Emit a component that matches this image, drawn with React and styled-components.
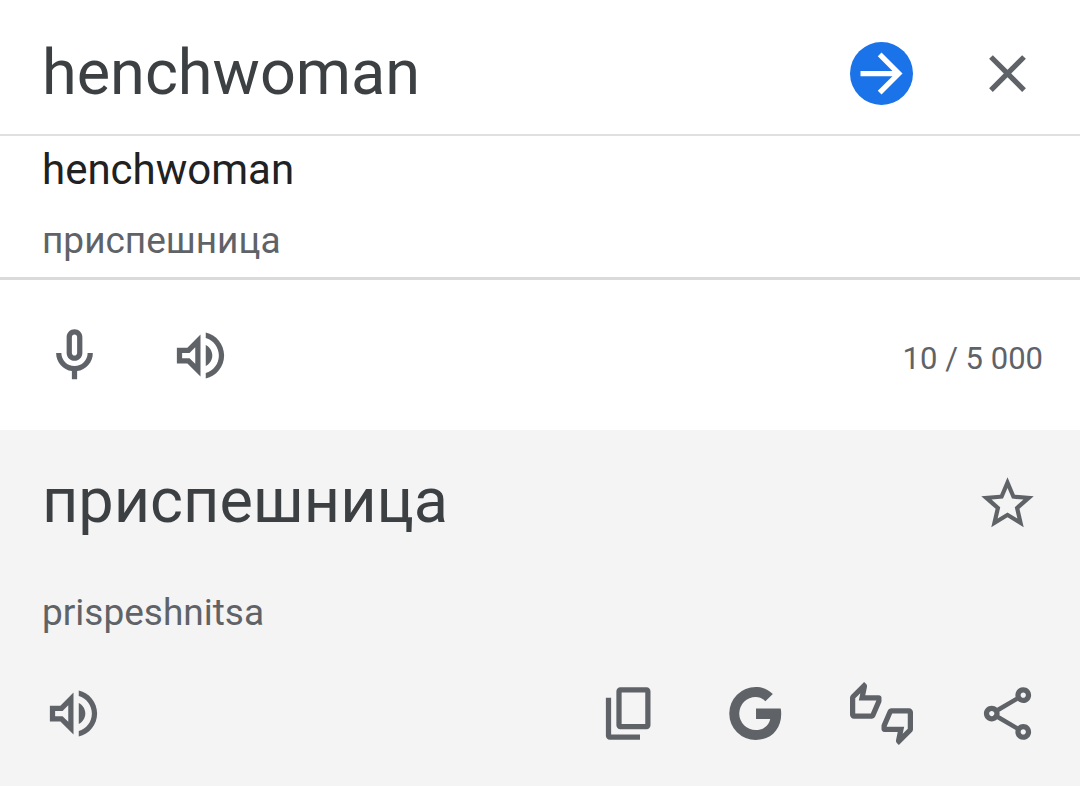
import React from "react";
import styled, { createGlobalStyle } from "styled-components";

const GlobalStyle = createGlobalStyle`
  *, *::before, *::after { box-sizing: border-box; }
  body {
    margin: 0;
    background: #fff;
    font-family: Roboto, "Noto Sans", sans-serif;
    color: #3c4043;
  }
  button, input { font: inherit; }
  h1, p { margin: 0; font-weight: 400; }
`;

const SearchBar = styled.header`
  display: flex;
  align-items: center;
  gap: 63px;
  padding: 36px 41px 23px 42px;
  border-bottom: 2px solid #e0e0e0;
`;

const SourceInput = styled.input`
  flex: 1;
  min-width: 0;
  height: 75px;
  padding: 0 0 3px;
  border: 0;
  outline: 0;
  background: none;
  color: #3c4043;
  font-size: 63px;
  line-height: 72px;
`;

const IconButton = styled.button`
  display: flex;
  flex: none;
  align-items: center;
  justify-content: center;
  width: 63px;
  height: 63px;
  padding: 0;
  border: 0;
  border-radius: 50%;
  background: ${(p) => (p.$filled ? "#1a73e8" : "none")};
  color: ${(p) => (p.$filled ? "#fff" : "#5f6368")};
  cursor: pointer;
`;

const Glyph = styled.svg`
  display: block;
  width: 63px;
  height: 63px;
  fill: currentColor;
  overflow: visible;
`;

const Suggestion = styled.button`
  display: flex;
  flex-direction: column;
  gap: 27px;
  width: 100%;
  padding: 10px 42px 16px;
  border: 0;
  border-bottom: 3px solid #dadada;
  background: #fff;
  text-align: left;
  cursor: pointer;
`;

const SuggestedWord = styled.span`
  color: #212121;
  font-size: 42px;
  line-height: 48px;
`;

const Secondary = styled.span`
  color: #5f6368;
  font-size: 37px;
  line-height: 40px;
`;

const Toolbar = styled.div`
  display: flex;
  align-items: flex-end;
  justify-content: space-between;
  padding: ${(p) => (p.$flush ? "0" : "44px 37px 43px 43px")};
`;

const ButtonGroup = styled.div`
  display: flex;
  gap: 63px;
`;

const Counter = styled.span`
  color: #5f6368;
  font-size: 31px;
  line-height: 56px;
`;

const Result = styled.section`
  display: flex;
  flex-direction: column;
  padding: 37px 41px 41px 42px;
  background: #f4f4f4;
`;

const ResultHead = styled.div`
  display: flex;
  align-items: flex-end;
  justify-content: space-between;
  margin-bottom: 58px;
`;

const ResultWord = styled.h1`
  font-size: 63px;
  line-height: 68px;
`;

const Transliteration = styled(Secondary).attrs({ as: "p" })`
  margin-bottom: 49px;
`;

const paths = {
  arrow: "M12 4l-1.41 1.41L16.17 11H4v2h12.17l-5.58 5.59L12 20l8-8z",
  close:
    "M19 6.41L17.59 5 12 10.59 6.41 5 5 6.41 10.59 12 5 17.59 6.41 19 12 13.41 17.59 19 19 17.59 13.41 12z",
  mic: "M12 14c1.66 0 3-1.34 3-3V5c0-1.66-1.34-3-3-3S9 3.34 9 5v6c0 1.66 1.34 3 3 3zm-1-9c0-.55.45-1 1-1s1 .45 1 1v6c0 .55-.45 1-1 1s-1-.45-1-1V5zm6 6c0 2.76-2.24 5-5 5s-5-2.24-5-5H5c0 3.53 2.61 6.43 6 6.92V21h2v-3.08c3.39-.49 6-3.39 6-6.92h-2z",
  speaker:
    "M3 9v6h4l5 5V4L7 9H3zm7-.17v6.34L7.83 13H5v-2h2.83L10 8.83zM16.5 12c0-1.77-1.02-3.29-2.5-4.03v8.05c1.48-.73 2.5-2.25 2.5-4.02zM14 3.23v2.06c2.89.86 5 3.54 5 6.71s-2.11 5.85-5 6.71v2.06c4.01-.91 7-4.49 7-8.77s-2.99-7.86-7-8.77z",
  star: "M22 9.24l-7.19-.62L12 2 9.19 8.63 2 9.24l5.46 4.73L5.82 21 12 17.27 18.18 21l-1.63-7.03L22 9.24zM12 15.4l-3.76 2.27 1-4.28-3.32-2.88 4.38-.38L12 6.1l1.71 4.04 4.38.38-3.32 2.88 1 4.28L12 15.4z",
  copy: "M18.5 2h-10C7.67 2 7 2.67 7 3.5v13c0 .83.67 1.5 1.5 1.5h10c.83 0 1.5-.67 1.5-1.5v-13c0-.83-.67-1.5-1.5-1.5zM18 16H9V4h9v12zM3 6v14.5c0 .83.67 1.5 1.5 1.5H16v-2H5V6H3z",
  google:
    "M18.6 4.6C16.9 2.9 14.7 1.9 12.1 1.9a10.1 10.1 0 0 0 0 20.2c5.8 0 9.7-4.1 9.7-9.9 0-.75-.05-1.4-.2-2.1h-9.4v3.95h5.4c-.5 2.55-2.6 4.25-5.5 4.25a6.3 6.3 0 0 1 0-12.6c1.45 0 2.65.6 3.65 1.65z",
  thumbs:
    "M12 6c0-.55-.45-1-1-1H5.82l.66-3.18.02-.23c0-.31-.13-.59-.33-.8L5.38 0 .44 4.94C.17 5.21 0 5.59 0 6v6.5c0 .83.67 1.5 1.5 1.5h6.75c.62 0 1.15-.38 1.38-.91l2.26-5.29c.07-.17.11-.36.11-.55V6zm-2 1.13L7.92 12H2V6.21l1.93-1.93L3.36 7H10v.13zM22.5 10h-6.75c-.62 0-1.15.38-1.38.91l-2.26 5.29c-.07.17-.11.36-.11.55V18c0 .55.45 1 1 1h5.18l-.66 3.18-.02.24c0 .31.13.59.33.8l.79.78 4.94-4.94c.27-.27.44-.65.44-1.06v-6.5c0-.83-.67-1.5-1.5-1.5zm-.5 7.79l-1.93 1.93.57-2.72H14v-.13L16.08 12H22v5.79z",
  share:
    "M18 16c-.79 0-1.5.31-2.03.81L8.91 12.7c.05-.23.09-.46.09-.7s-.04-.47-.09-.7l7.05-4.11c.54.5 1.25.81 2.04.81 1.66 0 3-1.34 3-3s-1.34-3-3-3-3 1.34-3 3c0 .24.04.47.09.7L8.04 9.81C7.5 9.31 6.79 9 6 9c-1.66 0-3 1.34-3 3s1.34 3 3 3c.79 0 1.5-.31 2.04-.81l7.05 4.12c-.05.22-.09.45-.09.69 0 1.66 1.34 3 3 3s3-1.34 3-3-1.34-3-3-3zM18 4c.55 0 1 .45 1 1s-.45 1-1 1-1-.45-1-1 .45-1 1-1zM6 13c-.55 0-1-.45-1-1s.45-1 1-1 1 .45 1 1-.45 1-1 1zm12 7c-.55 0-1-.45-1-1s.45-1 1-1 1 .45 1 1-.45 1-1 1z",
};

function Action({ icon, label, filled }) {
  return (
    <IconButton type="button" aria-label={label} $filled={filled}>
      <Glyph viewBox="0 0 24 24" aria-hidden="true">
        <path d={paths[icon]} />
      </Glyph>
    </IconButton>
  );
}

export default function App() {
  return (
    <>
      <GlobalStyle />
      <SearchBar>
        <SourceInput
          type="text"
          aria-label="Source text"
          defaultValue="henchwoman"
          spellCheck={false}
        />
        <Action icon="arrow" label="Translate" filled />
        <Action icon="close" label="Clear" />
      </SearchBar>
      <main>
        <Suggestion type="button">
          <SuggestedWord>henchwoman</SuggestedWord>
          <Secondary lang="ru">приспешница</Secondary>
        </Suggestion>
        <Toolbar>
          <ButtonGroup>
            <Action icon="mic" label="Voice input" />
            <Action icon="speaker" label="Listen to source" />
          </ButtonGroup>
          <Counter>10 / 5 000</Counter>
        </Toolbar>
        <Result>
          <ResultHead>
            <ResultWord lang="ru">приспешница</ResultWord>
            <Action icon="star" label="Save translation" />
          </ResultHead>
          <Transliteration>prispeshnitsa</Transliteration>
          <Toolbar $flush>
            <Action icon="speaker" label="Listen to translation" />
            <ButtonGroup>
              <Action icon="copy" label="Copy translation" />
              <Action icon="google" label="Search with Google" />
              <Action icon="thumbs" label="Rate translation" />
              <Action icon="share" label="Share translation" />
            </ButtonGroup>
          </Toolbar>
        </Result>
      </main>
    </>
  );
}
